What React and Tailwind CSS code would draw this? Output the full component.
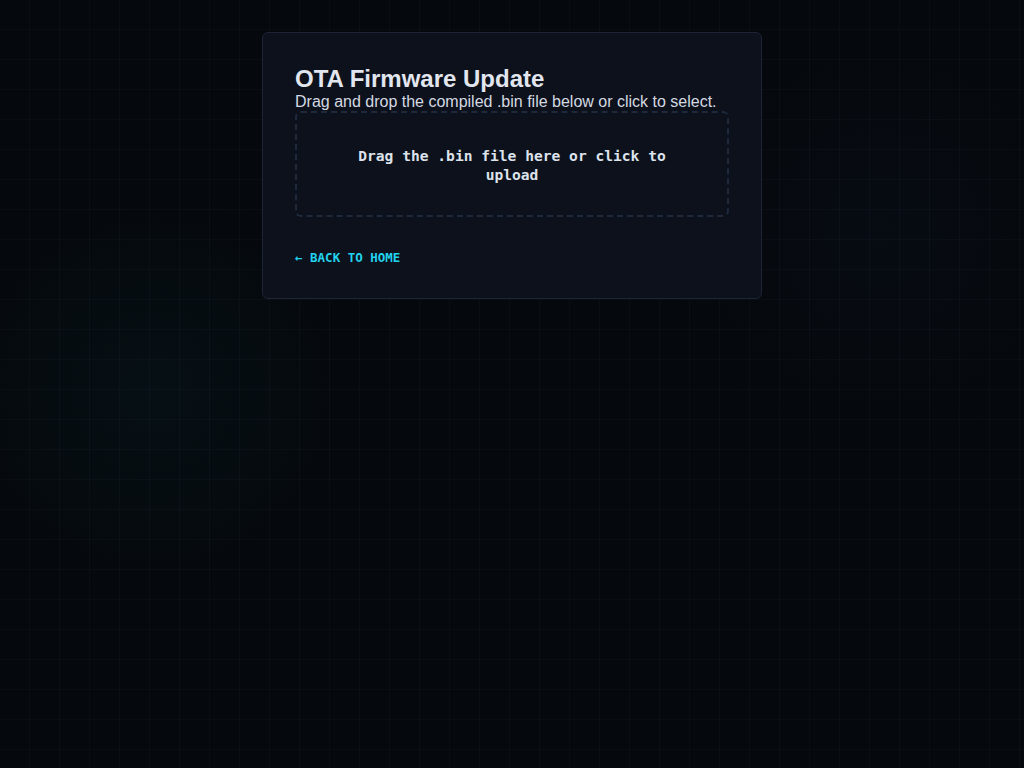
import { useRef, useState } from "react";

export default function App() {
  const inputRef = useRef(null);
  const [fileName, setFileName] = useState("");

  const handleDrop = (e) => {
    e.preventDefault();
    const f = e.dataTransfer.files?.[0];
    if (f) setFileName(f.name);
  };

  return (
    <div className="min-h-screen bg-[#05080c] bg-[radial-gradient(circle_at_15%_51%,rgba(20,160,175,0.05),transparent_22%),radial-gradient(circle_at_86%_30%,rgba(56,120,200,0.035),transparent_22%),linear-gradient(180deg,transparent_29px,rgba(148,163,184,0.03)_29px,rgba(148,163,184,0.03)_30px),linear-gradient(90deg,transparent_29px,rgba(148,163,184,0.03)_29px,rgba(148,163,184,0.03)_30px)] [background-size:100%_100%,100%_100%,30px_30px,30px_30px] pt-8">
      <div className="mx-auto w-[500px] rounded-md border border-[#1c2436] bg-[#0c111b] px-8 pt-8 pb-8 font-['Liberation_Sans',Arial,sans-serif]">
        <h1 className="text-[24px] leading-[1.15] font-bold text-[#e2e6ee]">
          OTA Firmware Update
        </h1>
        <p className="text-[16px] leading-[1.15] text-[#d4d9e2]">
          Drag and drop the compiled .bin file below or click to select.
        </p>

        {/* Drop zone */}
        <div
          onClick={() => inputRef.current?.click()}
          onDragOver={(e) => e.preventDefault()}
          onDrop={handleDrop}
          className="cursor-pointer rounded-md border-2 border-dashed border-[#1e293b] px-10 pt-[33px] pb-[31px] text-center font-['DejaVu_Sans_Mono',monospace] text-[14.6px] leading-[19px] font-bold text-[#dde3ec]"
        >
          {fileName || "Drag the .bin file here or click to upload"}
          <input
            ref={inputRef}
            type="file"
            accept=".bin"
            className="hidden"
            onChange={(e) => setFileName(e.target.files?.[0]?.name || "")}
          />
        </div>

        <a
          href="#"
          className="mt-8 block font-['DejaVu_Sans_Mono',monospace] text-[12.5px] leading-[17px] font-bold text-[#22d3ee]"
        >
          ← BACK TO HOME
        </a>
      </div>
    </div>
  );
}
